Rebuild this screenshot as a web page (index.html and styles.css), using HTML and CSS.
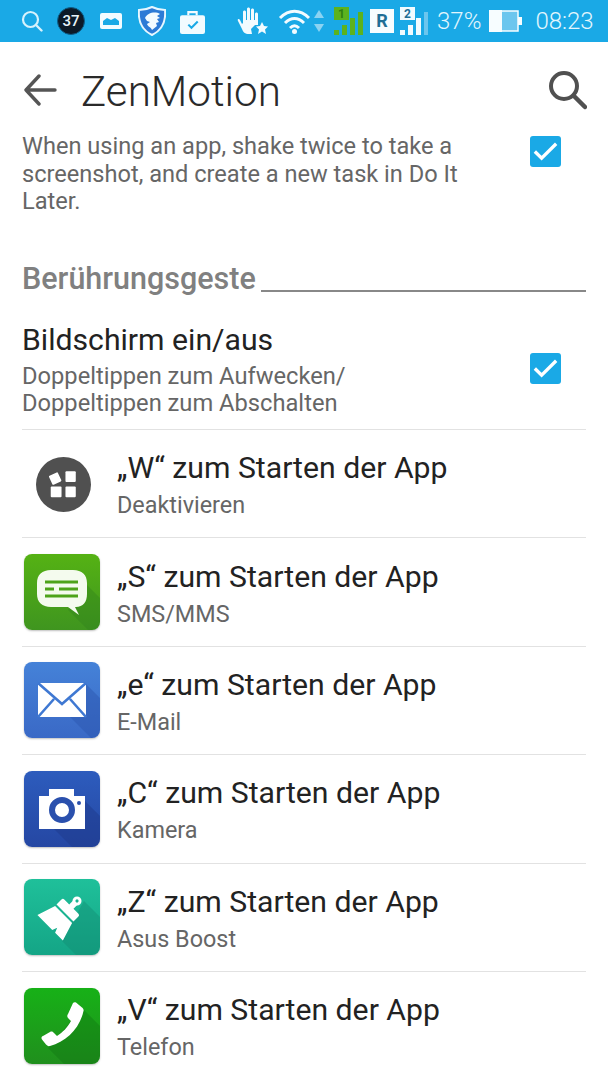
FILE: index.html
```html
<!DOCTYPE html>
<html lang="de">
<head>
<meta charset="UTF-8">
<title>ZenMotion</title>
<link rel="stylesheet" href="styles.css">
</head>
<body>

<!-- Statusleiste -->
<div class="status">
  <svg class="st st-search" viewBox="0 0 22 22"><circle cx="9.5" cy="9.5" r="7.5" fill="none" stroke="#d6f2fc" stroke-width="2.2"/><path d="M15 15l5.5 5.5" stroke="#d6f2fc" stroke-width="2.4" stroke-linecap="round"/></svg>
  <span class="st-badge">37</span>
  <svg class="st st-photo" viewBox="0 0 22 16"><rect width="22" height="16" rx="2" fill="#f2fbff"/><path d="M3 12V8l4-3 4 2 4-2 4 3v4z" fill="#1aa9e6"/></svg>
  <svg class="st st-shield" viewBox="0 0 28 30"><path d="M14 1c4 2 8 3 13 3 1 11-3 20-13 25C4 24 0 15 1 4c5 0 9-1 13-3z" fill="#2c7bd6" stroke="#e6f7ff" stroke-width="2"/><path d="M7 12c2-5 10-7 15-4l-3 2 3 2-3 1 2 3-3 1 1 3-5 4c-1-3-4-3-5-6l3-2-3-1z" fill="#f2fbff"/></svg>
  <svg class="st st-case" viewBox="0 0 24 24"><path d="M8 6V3h8v3" fill="none" stroke="#f2fbff" stroke-width="2"/><rect y="6" width="24" height="18" rx="2" fill="#f2fbff"/><path d="M8 15l3 3 6-6" fill="none" stroke="#1aa9e6" stroke-width="2"/></svg>
  <svg class="st st-hand" viewBox="0 0 32 28"><path d="M1 14l4 8c1 3 3 5 7 5h3l-1-5 4-4 3 0V7c0-2-3-2-3 0v6h-1V3c0-2-3-2-3 0v10h-1V2c0-2-3-2-3 0v11h-1V5c0-2-3-2-3 0v11l-1 1-2-4c-1-2-3-1-2 1z" fill="#f2fbff"/><path d="M25 15l2 4 4 .5-3 3 1 4.500-4-2.500-4 2.500 1-4.500-3-3 4-.5z" fill="#f2fbff"/></svg>
  <svg class="st st-wifi" viewBox="0 0 33 26"><path d="M2 10c9-9 20-9 29 0M7 15c6-6 13-6 19 0M12 20c3-3 6-3 9 0" fill="none" stroke="#f2fbff" stroke-width="3"/><circle cx="16.500" cy="23.500" r="2.500" fill="#f2fbff"/></svg>
  <svg class="st st-updown" viewBox="0 0 10 22"><path d="M5 0l5 8H0zM5 22L0 14h10z" fill="#8ad3f2"/></svg>
  <svg class="st st-sim sim-one" viewBox="0 0 31 28"><rect x="1" width="15" height="13" fill="#5cb21e"/><text x="8.500" y="11" class="sim-no">1</text><rect x="1" y="23" width="5" height="5"/><rect x="9" y="18" width="5" height="10"/><rect x="17" y="11" width="5" height="17"/><rect x="25" y="5" width="5" height="23"/></svg>
  <span class="st-roam">R</span>
  <svg class="st st-sim sim-two" viewBox="0 0 31 28"><rect x="1" width="15" height="13"/><text x="8.500" y="11" class="sim-no">2</text><rect x="1" y="23" width="5" height="5"/><rect x="9" y="18" width="5" height="10"/><rect x="17" y="11" width="5" height="17"/><rect x="25" y="5" width="4" height="23" class="weak"/></svg>
  <span class="st-text st-pct">37%</span>
  <svg class="st st-batt" viewBox="0 0 33 22"><rect x="1" y="1" width="28" height="20" fill="#6cc6ee" stroke="#f7fdff" stroke-width="1.500"/><rect width="13" height="22" fill="#f7fdff"/><rect x="29" y="7" width="4" height="8" fill="#f7fdff"/></svg>
  <span class="st-text st-time">08:23</span>
</div>

<!-- Kopfzeile -->
<div class="head">
  <svg class="back" viewBox="0 0 34 32"><path d="M32 16H3M16 2L3 16l13 14" fill="none" stroke="#555" stroke-width="3.400" stroke-linecap="round" stroke-linejoin="round"/></svg>
  <div class="title">ZenMotion</div>
  <svg class="find" viewBox="0 0 40 40"><circle cx="17" cy="16" r="13" fill="none" stroke="#505050" stroke-width="4"/><path d="M27 26l11 11" stroke="#505050" stroke-width="4.500" stroke-linecap="round"/></svg>
</div>

<div class="check-row first">
  <p class="desc">When using an app, shake twice to take a screenshot, and create a new task in Do It Later.</p>
  <span class="box"><svg viewBox="0 0 32 32"><path d="M5 16l7 7L27 8" fill="none" stroke="#fff" stroke-width="3.400"/></svg></span>
</div>

<div class="section">
  <span>Berührungsgeste</span>
  <i></i>
</div>

<div class="check-row second">
  <div>
    <div class="name">Bildschirm ein/aus</div>
    <p class="desc">Doppeltippen zum Aufwecken/<br>Doppeltippen zum Abschalten</p>
  </div>
  <span class="box"><svg viewBox="0 0 32 32"><path d="M5 16l7 7L27 8" fill="none" stroke="#fff" stroke-width="3.400"/></svg></span>
</div>

<div class="gesture">
  <span class="icon none">
    <svg viewBox="0 0 56 56"><circle cx="28" cy="28" r="28" fill="#505050"/><rect x="14.500" y="17" width="10" height="10" rx="1" fill="#fff" transform="rotate(-25 19.500 22)"/><rect x="30" y="14.500" width="10.500" height="11" rx="1" fill="#fff"/><rect x="15" y="30" width="11" height="11" rx="1" fill="#fff"/><rect x="30" y="30" width="10.500" height="11" rx="1" fill="#fff"/></svg>
  </span>
  <div class="text"><div class="name">„W“ zum Starten der App</div><div class="sub">Deaktivieren</div></div>
</div>

<div class="gesture">
  <span class="icon sms">
    <svg viewBox="0 0 76 76"><path d="M44 56l20 20h12V44L60 28z" fill="#2f7f1c" opacity=".35"/><path d="M27 16h22c9 0 14 5 14 13v11c0 8-4 13-11 13h-1l4 8-11-8H27c-9 0-14-5-14-13V29c0-8 5-13 14-13z" fill="#f4fbee"/><path d="M21 28h33M21 35h9M35 35h19M21 42h33" stroke="#4da31a" stroke-width="2.800"/></svg>
  </span>
  <div class="text"><div class="name">„S“ zum Starten der App</div><div class="sub">SMS/MMS</div></div>
</div>

<div class="gesture">
  <span class="icon mail">
    <svg viewBox="0 0 76 76"><path d="M62 22v33H46l21 21h9V36z" fill="#2a55ad" opacity=".45"/><rect x="14" y="21" width="48" height="34" fill="#fff"/><path d="M14 21l24 21 24-21M14 55l16-18M62 55L46 37" fill="none" stroke="#3f78d2" stroke-width="2.600"/></svg>
  </span>
  <div class="text"><div class="name">„e“ zum Starten der App</div><div class="sub">E-Mail</div></div>
</div>

<div class="gesture">
  <span class="icon cam">
    <svg viewBox="0 0 76 76"><path d="M61 30v28H30l18 18h28V45z" fill="#1d3a8c" opacity=".5"/><path d="M15 25h10v-7h25v7h11v33H15z" fill="#fff"/><circle cx="38" cy="39" r="10" fill="#fff" stroke="#2a50ad" stroke-width="6"/><circle cx="55" cy="32" r="2" fill="#2a50ad"/></svg>
  </span>
  <div class="text"><div class="name">„C“ zum Starten der App</div><div class="sub">Kamera</div></div>
</div>

<div class="gesture">
  <span class="icon brush">
    <svg viewBox="0 0 76 76"><path d="M60 22L38 62l14 14h24V38z" fill="#118a70" opacity=".4"/><g transform="rotate(45 41 34) translate(41 34)"><path d="M-3-17h6v8H10q2 0 2 2v7h-24v-7q0-2 2-2H-3z" fill="#fff"/><circle cx="0" cy="-17" r="4.500" fill="#fff"/><circle cx="0" cy="-17" r="1.600" fill="#1bb593"/><path d="M-12 2h24l6 19H7l-2-5-2 5H-18z" fill="#fff"/></g></svg>
  </span>
  <div class="text"><div class="name">„Z“ zum Starten der App</div><div class="sub">Asus Boost</div></div>
</div>

<div class="gesture">
  <span class="icon phone">
    <svg viewBox="0 0 76 76"><path d="M58 20L24 60l16 16h36V38z" fill="#0e6f12" opacity=".35"/><path d="M49 15c1-1 2-1 3-.5l6 5c1 1 2 2 1.500 3.500C56 40 42 54 26 58c-2 .5-3-.5-4-1.500l-4-5c-1-1.500-.5-3 1-3.500l7-4c2-1 3 0 4 1l3 3c6-4 10-8 14-15l-3-3c-1-1-1-3 0-4z" fill="#fff"/></svg>
  </span>
  <div class="text"><div class="name">„V“ zum Starten der App</div><div class="sub">Telefon</div></div>
</div>

</body>
</html>
```

FILE: styles.css
```css
body{margin:0;background:#fff;font-family:Roboto,"Liberation Sans",sans-serif;color:#222;height:1080px;overflow:hidden;}
p{margin:0;}

/* status bar */
.status{height:42px;background:#1aa9e6;display:flex;align-items:center;}
.st{display:block;flex:none;}
.st-search{width:22px;height:22px;margin-left:21px;}
.st-badge{flex:none;width:28px;height:28px;margin-left:14px;border-radius:50%;background:#0c1a28;border:1px solid #0d5f8a;box-sizing:border-box;color:#e8f4fa;font-size:15px;font-weight:500;line-height:26px;text-align:center;}
.st-photo{width:22px;height:16px;margin-left:15px;}
.st-shield{width:28px;height:30px;margin-left:16px;}
.st-case{width:25px;height:25px;margin-left:14px;}
.st-hand{width:32px;height:28px;margin-left:32px;}
.st-wifi{width:33px;height:26px;margin-left:9px;}
.st-updown{width:10px;height:22px;margin-left:3px;}
.st-sim{width:31px;height:28px;}
.sim-one{margin-left:9px;fill:#5cb21e;}
.sim-two{margin-left:5px;fill:#f2fbff;}
.sim-two .weak{fill:#6cc6ee;}
.sim-no{font-size:12px;font-weight:700;text-anchor:middle;}
.sim-one .sim-no{fill:#2f7f10;}
.sim-two .sim-no{fill:#1f6f96;}
.st-roam{flex:none;width:24px;height:24px;margin-left:6px;background:#f7fdff;color:#1f6f96;font-size:18px;font-weight:700;line-height:24px;text-align:center;}
.st-text{color:#e3f6fd;font-size:24px;font-weight:300;}
.st-pct{margin-left:7px;}
.st-batt{width:33px;height:22px;margin-left:8px;}
.st-time{margin-left:13px;}

/* header */
.head{height:91px;display:flex;align-items:center;}
.back{width:34px;height:32px;margin-left:23px;margin-top:4px;}
.title{margin-left:24px;font-size:42.200px;font-weight:300;color:#2a2a2a;margin-top:7px;}
.find{width:40px;height:40px;margin-left:auto;margin-right:21px;margin-top:4px;}

/* settings rows */
.check-row{display:flex;justify-content:space-between;align-items:flex-start;padding:0 47px 0 22px;}
.desc{font-size:23.600px;line-height:27.500px;color:#666;}
.first{height:111px;}
.first .desc{width:450px;}
.box{flex:none;width:31px;height:31px;background:#1aa9e6;border-radius:3px;margin-top:3px;}
.box svg{display:block;width:31px;height:31px;}
.second{height:107px;}
.second .box{margin-top:31px;}
.second .desc{margin-top:5.500px;font-size:23.700px;}

.section{display:flex;align-items:flex-end;padding:0 22px;height:52px;margin-bottom:26px;}
.section span{font-size:30.500px;font-weight:500;color:#808080;}
.section i{flex:1;margin-left:5px;border-bottom:2px solid #888;margin-bottom:4px;}

.name{font-size:30.200px;color:#222;}
.sub{font-size:23.400px;color:#666;margin-top:6px;}

/* gesture list */
.gesture{height:108.400px;box-sizing:border-box;margin:0 22px;border-top:1px solid #e2e2e2;display:flex;align-items:center;gap:17px;}
.text{margin-top:2px;}
.icon{flex:none;display:block;width:76px;height:76px;margin-left:2px;border-radius:8px;overflow:hidden;box-shadow:0 1px 2px rgba(0,0,0,.25);}
.icon svg{display:block;width:76px;height:76px;}
.none{background:none;box-shadow:none;box-sizing:border-box;padding:11px 8px 10px 12px;}
.none svg{width:55px;height:55px;}
.sms{background:linear-gradient(#55b214,#3f951f);}
.mail{background:linear-gradient(#4582d8,#3a69c6);}
.cam{background:linear-gradient(#2d5cbd,#2547a3);}
.brush{background:linear-gradient(#1fc09a,#14a586);}
.phone{background:linear-gradient(#17b117,#208f1d);}
```
